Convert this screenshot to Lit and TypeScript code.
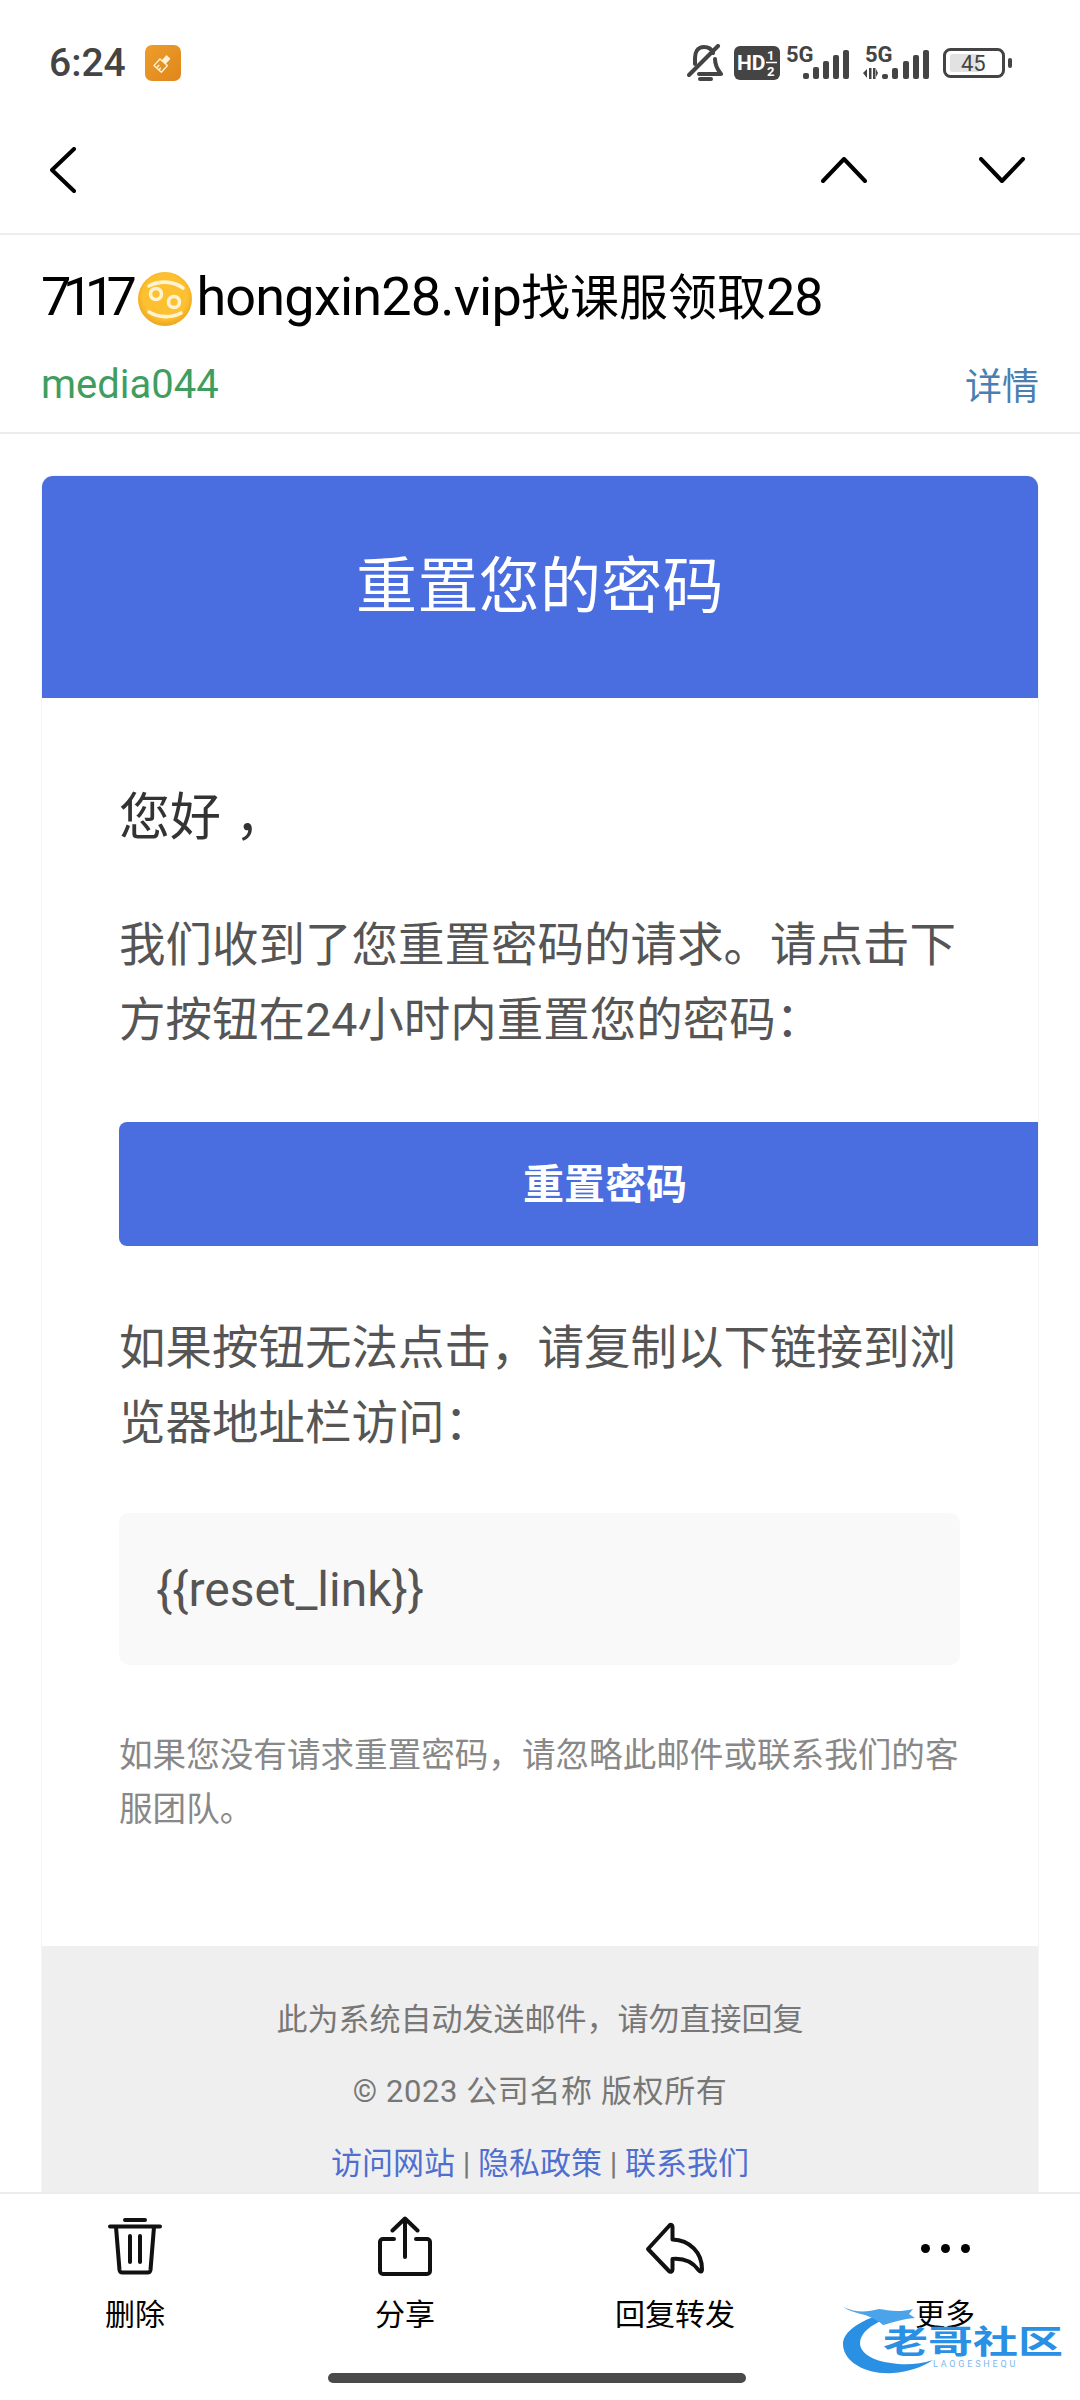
import { LitElement, html, css, svg } from 'lit';
import { customElement } from 'lit/decorators.js';

const tabIcons = {
  trash: svg`<path d="M6 10.500h50M21 4h20" /><path d="M12 11l3.500 43a3 3 0 0 0 3 2.500h25a3 3 0 0 0 3-2.500l3.500-43" /><path d="M26 20v26M36 20v26" />`,
  share: svg`<path d="M19 23H8a3 3 0 0 0-3 3v29a3 3 0 0 0 3 3h44a3 3 0 0 0 3-3V26a3 3 0 0 0-3-3H41" /><path d="M30 41V3M17.500 14.500L30 2.500l12.500 12" />`,
  reply: svg`<path d="M26.500 5.500 5 29l21 22c1.500 1.500 3.500.5 3.500-1.500V39c12 -1 20 3 26 11 2 2.500 3.500 2 3.500-1C59 33 47 20 29.500 19.500V7c0-2-1.500-3-3-1.500z" />`,
};

const barsA = [[17, 27], [27, 21], [37, 15], [47, 9], [57, 4]];
const barsB = [[19, 28], [29, 22], [40, 15], [50, 9], [60, 4]];

@customElement('app-root')
export class AppRoot extends LitElement {
  static styles = css`
    :host {
      display: flex;
      flex-direction: column;
      position: relative;
      width: 1080px;
      height: 2400px;
      overflow: hidden;
      background: #fff;
      font-family: 'Roboto', 'Noto Sans CJK SC', sans-serif;
      color: #000;
    }

    .status {
      display: flex;
      align-items: center;
      height: 126px;
      padding: 0 68px 0 49px;
      flex: none;
    }
    .time {
      font-size: 39px;
      font-weight: 500;
      color: #444;
    }
    .app-icon {
      display: flex;
      align-items: center;
      justify-content: center;
      width: 36px;
      height: 36px;
      margin-left: 19px;
      border-radius: 7px;
      background: linear-gradient(135deg, #ee9d2c, #df861c);
    }
    .status-right {
      display: flex;
      align-items: center;
      margin-left: auto;
    }
    .sig {
      margin-top: -6px;
    }

    .nav {
      display: flex;
      align-items: center;
      height: 109px;
      padding: 0 55px 20px 50px;
      box-sizing: border-box;
      border-bottom: 2px solid #ececec;
      flex: none;
    }
    .nav svg {
      fill: none;
      stroke: #000;
      stroke-width: 4;
      stroke-linecap: round;
      stroke-linejoin: round;
    }
    .nav .up {
      margin-left: auto;
    }
    .nav .down {
      margin-left: 112px;
    }

    .head {
      height: 199px;
      padding: 0 41px;
      box-sizing: border-box;
      border-bottom: 2px solid #ececec;
      flex: none;
    }
    .subject {
      height: 126px;
      font-size: 49px;
      line-height: 124px;
      white-space: nowrap;
    }
    .subject .num {
      font-size: 54px;
      letter-spacing: -8.500px;
    }
    .subject .tail {
      font-size: 54px;
      letter-spacing: -0.800px;
    }
    .subject .end {
      font-size: 52px;
      letter-spacing: -1px;
    }
    .subject svg {
      margin: 0 4px 0 10px;
      vertical-align: -11px;
    }
    .meta {
      display: flex;
      justify-content: space-between;
      align-items: center;
      height: 46px;
    }
    .sender {
      font-size: 40px;
      color: #3f9e5f;
    }
    .detail {
      font-size: 37px;
      color: #4a80b0;
    }

    .scroll {
      flex: 1;
      min-height: 0;
      overflow: hidden;
      padding: 41px 41px 0;
    }
    .card {
      width: 998px;
      height: 1800px;
      border-radius: 12px;
      overflow: hidden;
      box-sizing: border-box;
      border: 1px solid #f4f4f4;
    }
    .banner {
      display: flex;
      align-items: center;
      justify-content: center;
      box-sizing: border-box;
      height: 222px;
      padding-bottom: 12px;
      background: #4a6ee0;
      color: #fff;
      font-size: 61px;
      letter-spacing: 0.3px;
    }
    .body {
      padding: 80px 77px 0;
      height: 1248px;
      box-sizing: border-box;
      white-space: nowrap;
    }
    .hello {
      font-size: 51px;
      line-height: 80px;
      color: #333;
    }
    .hello span {
      margin-left: 14px;
    }
    .para {
      font-size: 46.500px;
      line-height: 75px;
      color: #555;
    }
    .first {
      margin-top: 50px;
    }
    .btn {
      display: flex;
      align-items: center;
      justify-content: center;
      box-sizing: border-box;
      width: 972px;
      height: 124px;
      margin: 64px 0 65px;
      padding-bottom: 6px;
      border-radius: 8px;
      background: #4a6ee0;
      color: #fff;
      font-size: 41px;
      font-weight: 700;
    }
    .link {
      display: flex;
      align-items: center;
      box-sizing: border-box;
      height: 152px;
      width: 841px;
      margin-top: 52px;
      padding-left: 37px;
      border-radius: 10px;
      background: #f9f9f9;
      font-size: 48px;
      color: #555;
    }
    .note {
      margin-top: 64px;
      font-size: 33.600px;
      line-height: 54px;
      color: #888;
    }
    .footer {
      padding-top: 38px;
      height: 400px;
      box-sizing: border-box;
      background: #efefef;
      text-align: center;
      font-size: 31px;
      line-height: 72px;
      color: #777;
    }
    .footer .copy {
      letter-spacing: 0.600px;
    }
    .footer a {
      color: #4f6fd0;
    }

    .tabs {
      display: grid;
      grid-template-columns: repeat(4, 270px);
      height: 208px;
      box-sizing: border-box;
      border-top: 2px solid #ececec;
      background: #fff;
      flex: none;
    }
    .tab {
      display: flex;
      flex-direction: column;
      align-items: center;
      font-size: 30px;
      line-height: 40px;
    }
    .tab svg {
      display: block;
      margin: 22px 0 15px;
      fill: none;
      stroke: #111;
      stroke-width: 4;
      stroke-linecap: round;
      stroke-linejoin: round;
    }
    .dots {
      display: flex;
      align-items: center;
      justify-content: center;
      gap: 11px;
      height: 64px;
      margin: 22px 0 15px;
    }
    .dots i {
      width: 9px;
      height: 9px;
      border-radius: 50%;
      background: #000;
    }

    .home-bar {
      position: absolute;
      left: 328px;
      top: 2373px;
      width: 418px;
      height: 10px;
      border-radius: 5px;
      background: #4a4a4a;
    }
    .mark {
      position: absolute;
      left: 843px;
      top: 2305px;
      width: 222px;
      height: 72px;
    }
    .mark svg {
      position: absolute;
      inset: 0;
    }
    .mark b {
      position: absolute;
      left: 40px;
      top: 14px;
      font-size: 45px;
      line-height: 46px;
      font-weight: 700;
      color: #2a90e4;
      white-space: nowrap;
      transform: scaleY(0.72);
    }
    .mark span {
      position: absolute;
      left: 90px;
      top: 54px;
      font-size: 9px;
      line-height: 11px;
      letter-spacing: 2.800px;
      color: #7ab8ec;
    }
  `;

  private renderStatusIcons() {
    return html`
      <div class="status-right">
        <svg width="36" height="38" viewBox="0 0 36 38" fill="none" stroke="#444" stroke-width="4" stroke-linecap="round" stroke-linejoin="round">
          <path d="M31 2 2 31" />
          <path d="M26 9c-1-3-4-6-9-6-7 0-9 6-9 11v6M28 15c0 6 2 10 6 15H12" />
          <path d="M13 35h11" />
        </svg>
        <svg style="margin-left:11px" width="46" height="34" viewBox="0 0 46 34">
          <rect width="46" height="34" rx="6" fill="#444" />
          <text x="3" y="24" font-family="Roboto" font-weight="700" font-size="21" fill="#fff">HD</text>
          <text x="33" y="14" font-family="Roboto" font-weight="700" font-size="13" fill="#fff">1</text>
          <path d="M32 16.500h11" stroke="#fff" stroke-width="1.500" />
          <text x="33" y="30" font-family="Roboto" font-weight="700" font-size="13" fill="#fff">2</text>
        </svg>
        <svg class="sig" style="margin-left:6px" width="64" height="41" viewBox="0 -6 64 41">
          <text x="0" y="16" font-family="Roboto" font-weight="700" font-size="22" fill="#444">5G</text>
          ${barsA.map(([x, y]) => svg`<rect x=${x} y=${y} width="6" height=${33 - y} rx="2" fill="#444" />`)}
        </svg>
        <svg class="sig" style="margin-left:13px" width="66" height="41" viewBox="0 -6 66 41">
          <text x="2" y="16" font-family="Roboto" font-weight="700" font-size="22" fill="#444">5G</text>
          <path d="M0 27l4-4v9zM6 22h2.500v11H6zM10 22h2.500v11H10zM13 23l2 4-2 4z" fill="#444" />
          ${barsB.map(([x, y]) => svg`<rect x=${x} y=${y} width="6" height=${33 - y} rx="2" fill="#444" />`)}
        </svg>
        <svg style="margin-left:14px" width="69" height="30" viewBox="0 0 69 30">
          <rect x="1.500" y="1.500" width="59" height="27" rx="6" fill="none" stroke="#444" stroke-width="3" />
          <rect x="7" y="6" width="30" height="18" rx="2" fill="#e2e2e2" />
          <text x="18" y="23" font-family="Roboto" font-size="22" fill="#444">45</text>
          <rect x="65" y="10" width="4" height="10" rx="2" fill="#444" />
        </svg>
      </div>
    `;
  }

  render() {
    return html`
      <div class="status">
        <span class="time">6:24</span>
        <div class="app-icon">
          <svg width="20" height="20" viewBox="0 0 20 20" fill="none" stroke="#fff4d6" stroke-width="1.400" stroke-linejoin="round">
            <g transform="rotate(42 10 10)">
              <path d="M5 9h10v9H5zM8.500 18v-4M11.500 18v-3" />
              <path d="M8 9V2.500h4V9" fill="#fff4d6" />
            </g>
          </svg>
        </div>
        ${this.renderStatusIcons()}
      </div>

      <div class="nav">
        <svg width="26" height="46" viewBox="0 0 26 46"><path d="M24 2 2 23l22 21" /></svg>
        <svg class="up" width="46" height="26" viewBox="0 0 46 26"><path d="M2 24 23 2l21 22" /></svg>
        <svg class="down" width="46" height="26" viewBox="0 0 46 26"><path d="M2 2l21 22L44 2" /></svg>
      </div>

      <div class="head">
        <div class="subject">
          <span class="num">7117</span><svg width="54" height="54" viewBox="0 0 54 54">
            <defs>
              <radialGradient id="gold" cx="0.5" cy="0.45" r="0.55">
                <stop offset="0.75" stop-color="#fcc030" />
                <stop offset="1" stop-color="#eda61c" />
              </radialGradient>
            </defs>
            <circle cx="27" cy="27" r="27" fill="url(#gold)" />
            <g fill="none" stroke="#fff3d2" stroke-width="3.600" stroke-linecap="round">
              <circle cx="18" cy="22" r="5.500" />
              <circle cx="36" cy="30" r="5.500" />
              <path d="M11 14c9-5 23-6 34 2M11 40c10 6 23 6 32 1" />
            </g>
          </svg><span class="tail">hongxin28.vip</span>找课服领取<span class="end">28</span>
        </div>
        <div class="meta">
          <span class="sender">media044</span>
          <span class="detail">详情</span>
        </div>
      </div>

      <div class="scroll">
        <div class="card">
          <div class="banner">重置您的密码</div>
          <div class="body">
            <div class="hello">您好<span>，</span></div>
            <div class="para first">我们收到了您重置密码的请求。请点击下<br />方按钮在24小时内重置您的密码：</div>
            <div class="btn">重置密码</div>
            <div class="para">如果按钮无法点击，请复制以下链接到浏<br />览器地址栏访问：</div>
            <div class="link">{{reset_link}}</div>
            <div class="note">如果您没有请求重置密码，请忽略此邮件或联系我们的客<br />服团队。</div>
          </div>
          <div class="footer">
            <div>此为系统自动发送邮件，请勿直接回复</div>
            <div class="copy">© 2023 公司名称 版权所有</div>
            <div><a>访问网站</a> | <a>隐私政策</a> | <a>联系我们</a></div>
          </div>
        </div>
      </div>

      <div class="tabs">
        <div class="tab">
          <svg width="62" height="64" viewBox="0 0 62 64">${tabIcons.trash}</svg>
          删除
        </div>
        <div class="tab">
          <svg width="60" height="64" viewBox="0 0 60 64">${tabIcons.share}</svg>
          分享
        </div>
        <div class="tab">
          <svg width="64" height="64" viewBox="0 0 64 56">${tabIcons.reply}</svg>
          回复转发
        </div>
        <div class="tab">
          <div class="dots"><i></i><i></i><i></i></div>
          更多
        </div>
      </div>

      <div class="home-bar"></div>
      <div class="mark">
        <svg width="222" height="72" viewBox="0 0 222 72">
          <path d="M30 12C10 20-1 30 0 40c1 18 25 30 50 28 15-1 30-6 40-13-15 5-30 5-42 3-18-2-31-10-31-20 0-10 11-18 25-24z" fill="#2a90e4" />
          <path d="M0 2c14 6 24 5 36 2 8 1 19 4 34 0l-4 5 6 4c-14 1-24 5-32 7-4-4-10-7-18-10C14 8 6 6 0 2z" fill="#4ba3ea" />
        </svg>
        <b>老哥社区</b>
        <span>LAOGESHEQU</span>
      </div>
    `;
  }
}

declare global {
  interface HTMLElementTagNameMap {
    'app-root': AppRoot;
  }
}
